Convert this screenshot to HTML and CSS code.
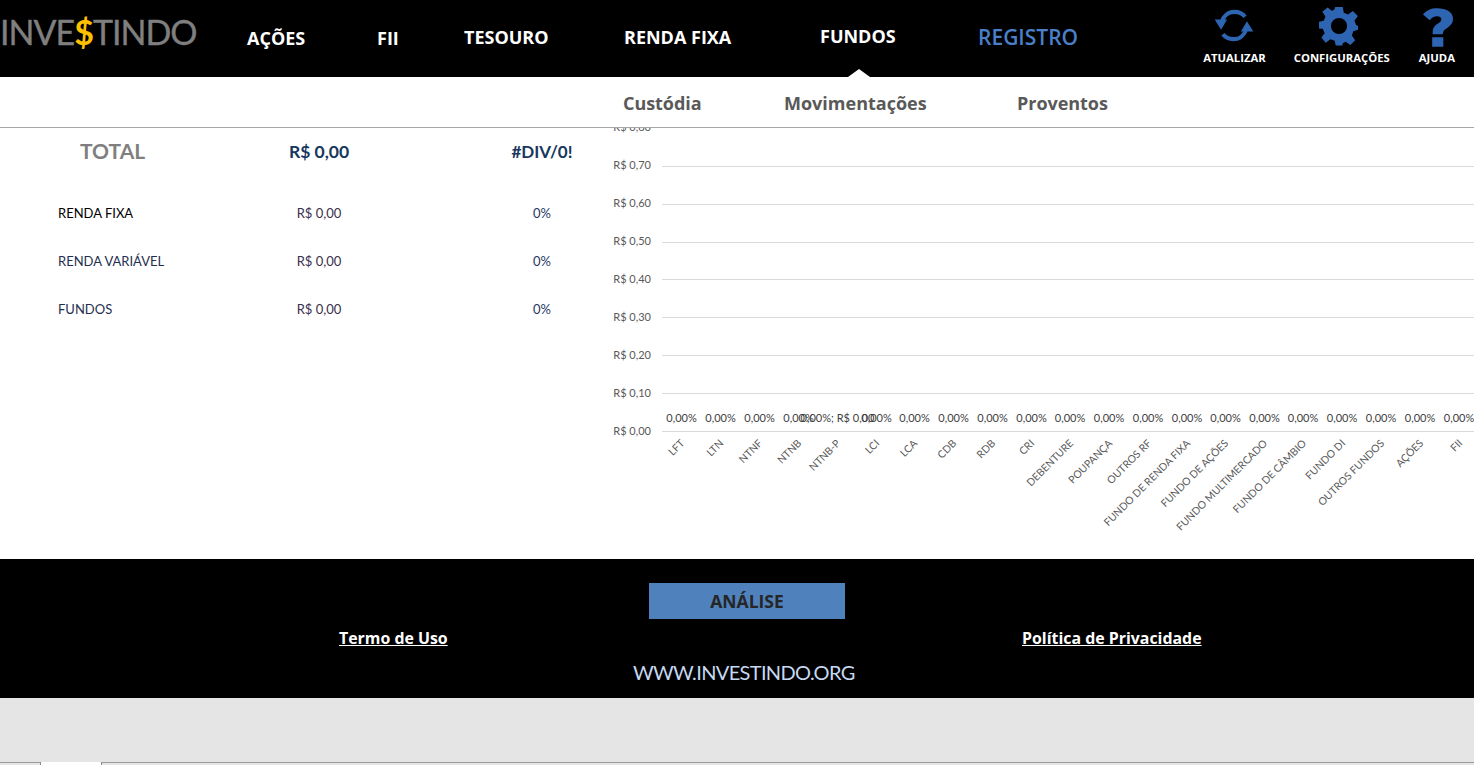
FILE: index.html
```html
<!DOCTYPE html>
<html lang="pt-BR">
<head>
<meta charset="utf-8">
<title>Investindo</title>
<link rel="stylesheet" href="styles.css">
</head>
<body>
<header class="topbar">
  <div class="logo">INVE<span class="logo-dollar">$</span>TINDO</div>
  <nav class="mainnav">
    <a class="nav-item nav-acoes">AÇÕES</a>
    <a class="nav-item nav-fii">FII</a>
    <a class="nav-item nav-tesouro">TESOURO</a>
    <a class="nav-item nav-renda">RENDA FIXA</a>
    <a class="nav-item nav-fundos">FUNDOS</a>
    <a class="nav-item nav-registro">REGISTRO</a>
  </nav>
  <div class="tools">
    <div class="tool">
      <svg class="tool-icon icon-refresh" width="40" height="35" viewBox="0 0 42 38"><g fill="none" stroke="#2e65b3" stroke-width="4.4"><path d="M7.5 15.5C9.5 8.5 15 4.2 21.500 4.200C26.500 4.200 30.500 6.200 33 9.500"/><path d="M34.500 22.500C32.500 29.500 27 33.800 20.500 33.800C15.500 33.800 11.500 31.800 9 28.500"/></g><path fill="#2e65b3" d="M0 12.500L13.500 12.500L7 23.500Z"/><path fill="#2e65b3" d="M42 25.500L28.500 25.500L35 14.500Z"/></svg>
      <span class="tool-label">ATUALIZAR</span>
    </div>
    <div class="tool">
      <svg class="tool-icon icon-gear" width="40" height="40" viewBox="0 0 42 42"><path fill="#2e65b3" fill-rule="evenodd" d="M17 1H25L26 7L30.500 8.800L35.500 5.200L40.800 10.500L37.200 15.500L39 20L41 21V25L36 26.500L34.500 31L38 36L33 41L28 37.500L25 39L24.500 41.500H17.500L16.500 36.500L12 35L7 38.500L2.500 33L6 28.500L4 24L0 23.500V16.500L5 15.500L6.800 11L3.500 6L9 1.500L13.500 5L16 4ZM21 12.500A8.500 8.500 0 1 0 21 29.500A8.500 8.500 0 1 0 21 12.500Z"/></svg>
      <span class="tool-label">CONFIGURAÇÕES</span>
    </div>
    <div class="tool">
      <svg class="tool-icon icon-help" width="30" height="39" viewBox="0 0 31 40"><path fill="#2e65b3" d="M0 6.500C3.500 2 8.500 0 14.500 0C24 0 31 3.800 31 11C31 15.500 28.500 18 25 20.500C22 22.500 20.500 23.500 20.500 27H10V25C10 20.500 12 18.300 15 16.200C17.500 14.500 19 13.500 19 11.500C19 9.500 17 8.500 14.500 8.500C11.500 8.500 9 10 7 12.500ZM9.500 30H21V40H9.500Z"/></svg>
      <span class="tool-label">AJUDA</span>
    </div>
  </div>
</header>

<nav class="subnav">
  <a class="sub-item sub-custodia">Custódia</a>
  <a class="sub-item sub-mov">Movimentações</a>
  <a class="sub-item sub-prov">Proventos</a>
</nav>

<main class="content">
  <section class="summary">
    <div class="sum-total">
      <span class="total-label">TOTAL</span>
      <span class="total-value">R$ 0,00</span>
      <span class="total-pct">#DIV/0!</span>
    </div>
    <div class="sum-row">
      <span class="row-label row-label-first">RENDA FIXA</span>
      <span class="row-value">R$ 0,00</span>
      <span class="row-pct">0%</span>
    </div>
    <div class="sum-row">
      <span class="row-label">RENDA VARIÁVEL</span>
      <span class="row-value">R$ 0,00</span>
      <span class="row-pct">0%</span>
    </div>
    <div class="sum-row">
      <span class="row-label">FUNDOS</span>
      <span class="row-value">R$ 0,00</span>
      <span class="row-pct">0%</span>
    </div>
  </section>
  <section class="chart">
    <svg class="chart-svg" width="862" height="431" viewBox="612 128 862 431">
      <g class="grid">
        <line x1="662" x2="1474" y1="166.500" y2="166.500"/>
        <line x1="662" x2="1474" y1="204.500" y2="204.500"/>
        <line x1="662" x2="1474" y1="242.500" y2="242.500"/>
        <line x1="662" x2="1474" y1="279.500" y2="279.500"/>
        <line x1="662" x2="1474" y1="317.500" y2="317.500"/>
        <line x1="662" x2="1474" y1="355.500" y2="355.500"/>
        <line x1="662" x2="1474" y1="393.500" y2="393.500"/>
        <line x1="662" x2="1474" y1="431.500" y2="431.500"/>
      </g>
      <g class="axis-y">
        <text x="651" y="131">R$ 0,80</text>
        <text x="651" y="169">R$ 0,70</text>
        <text x="651" y="207">R$ 0,60</text>
        <text x="651" y="245">R$ 0,50</text>
        <text x="651" y="283">R$ 0,40</text>
        <text x="651" y="321">R$ 0,30</text>
        <text x="651" y="359">R$ 0,20</text>
        <text x="651" y="397">R$ 0,10</text>
        <text x="651" y="435">R$ 0,00</text>
      </g>
      <g class="vals">
        <text x="681.500" y="422">0,00%</text>
        <text x="720.500" y="422">0,00%</text>
        <text x="759.500" y="422">0,00%</text>
        <text x="798.500" y="422">0,00%</text>
        <text x="837.500" y="422">0,00%; R$ 0,00</text>
        <text x="876.500" y="422">0,00%</text>
        <text x="914.500" y="422">0,00%</text>
        <text x="953.500" y="422">0,00%</text>
        <text x="992.500" y="422">0,00%</text>
        <text x="1031.500" y="422">0,00%</text>
        <text x="1070" y="422">0,00%</text>
        <text x="1109" y="422">0,00%</text>
        <text x="1148" y="422">0,00%</text>
        <text x="1187" y="422">0,00%</text>
        <text x="1225.500" y="422">0,00%</text>
        <text x="1264.500" y="422">0,00%</text>
        <text x="1303" y="422">0,00%</text>
        <text x="1342" y="422">0,00%</text>
        <text x="1381" y="422">0,00%</text>
        <text x="1420" y="422">0,00%</text>
        <text x="1459" y="422">0,00%</text>
      </g>
      <g class="cats">
        <text transform="translate(685 444) rotate(-45)">LFT</text>
        <text transform="translate(724 444) rotate(-45)">LTN</text>
        <text transform="translate(763 444) rotate(-45)">NTNF</text>
        <text transform="translate(802 444) rotate(-45)">NTNB</text>
        <text transform="translate(841 444) rotate(-45)">NTNB-P</text>
        <text transform="translate(880 444) rotate(-45)">LCI</text>
        <text transform="translate(918 444) rotate(-45)">LCA</text>
        <text transform="translate(957 444) rotate(-45)">CDB</text>
        <text transform="translate(996 444) rotate(-45)">RDB</text>
        <text transform="translate(1035 444) rotate(-45)">CRI</text>
        <text transform="translate(1074 444) rotate(-45)">DEBENTURE</text>
        <text transform="translate(1113 444) rotate(-45)">POUPANÇA</text>
        <text transform="translate(1152 444) rotate(-45)">OUTROS RF</text>
        <text transform="translate(1191 444) rotate(-45)">FUNDO DE RENDA FIXA</text>
        <text transform="translate(1229 444) rotate(-45)">FUNDO DE AÇÕES</text>
        <text transform="translate(1268 444) rotate(-45)">FUNDO MULTIMERCADO</text>
        <text transform="translate(1307 444) rotate(-45)">FUNDO DE CÂMBIO</text>
        <text transform="translate(1346 444) rotate(-45)">FUNDO DI</text>
        <text transform="translate(1385 444) rotate(-45)">OUTROS FUNDOS</text>
        <text transform="translate(1424 444) rotate(-45)">AÇÕES</text>
        <text transform="translate(1463 444) rotate(-45)">FII</text>
      </g>
    </svg>
  </section>
</main>

<footer class="footer">
  <div class="btn-row"><a class="btn-analise">ANÁLISE</a></div>
  <div class="legal">
    <a class="legal-link legal-termo">Termo de Uso</a>
    <a class="legal-link legal-priv">Política de Privacidade</a>
  </div>
  <div class="site">WWW.INVESTINDO.ORG</div>
</footer>

<div class="sheetbar">
  <div class="sheet-tab"></div>
</div>
</body>
</html>
```
FILE: styles.css
```css
* { box-sizing: border-box; }
html, body { margin: 0; padding: 0; }
body {
  width: 1474px;
  height: 765px;
  overflow: hidden;
  background: #fff;
  font-family: "Open Sans", "Noto Sans", sans-serif;
}

/* header */
.topbar {
  height: 77px;
  background: #000;
  display: flex;
  position: relative;
}
.logo {
  width: 247px;
  padding-top: 9px;
  font-family: Lato, sans-serif;
  font-size: 34px;
  line-height: 46px;
  letter-spacing: -1px;
  color: #7f7f7f;
  -webkit-text-stroke: 0.4px #7f7f7f;
}
.logo-dollar { color: #ffc000; font-weight: 700; -webkit-text-stroke: 0; }
.mainnav {
  display: grid;
  grid-template-columns: 130px 87px 160px 196px 158px 120px;
  width: 851px;
}
.nav-item {
  font-size: 18px;
  font-weight: 700;
  line-height: 24px;
  color: #fff;
  white-space: nowrap;
  position: relative;
}
.nav-acoes, .nav-fii { padding-top: 26px; }
.nav-tesouro, .nav-renda { padding-top: 25px; }
.nav-fundos { padding-top: 24px; }
.nav-registro { padding-top: 25px; font-size: 21px; color: #4a7fc9; font-weight: 600; }
.nav-fundos::after {
  content: "";
  position: absolute;
  left: 28px;
  top: 69px;
  border-left: 11px solid transparent;
  border-right: 11px solid transparent;
  border-bottom: 8px solid #fff;
}
.tools {
  margin-left: auto;
  padding-right: 19px;
  display: flex;
  gap: 28px;
}
.tool {
  display: flex;
  flex-direction: column;
  align-items: center;
  height: 77px;
  position: relative;
}
.tool:nth-child(3) { margin-left: 1px; }
.tool-icon { position: absolute; top: 8px; }
.icon-gear { top: 6px; transform: translateX(-3px); }
.icon-help { transform: translateX(1px); }
.tool-label {
  margin-top: 50px;
  font-size: 11.300px;
  line-height: 16px;
  font-weight: 700;
  color: #fff;
  white-space: nowrap;
}

/* sub nav */
.subnav {
  height: 51px;
  border-bottom: 1px solid #a6a6a6;
  display: grid;
  grid-template-columns: 161px 233px auto;
  padding-left: 623px;
  align-items: center;
  background: #fff;
}
.sub-item {
  font-size: 18px;
  font-weight: 700;
  color: #595959;
  line-height: 24px;
  padding-top: 2px;
  white-space: nowrap;
}
.sub-custodia, .sub-prov { letter-spacing: -0.05px; }

/* content */
.content {
  height: 431px;
  display: flex;
  overflow: hidden;
}
.summary {
  width: 612px;
  font-family: Lato, sans-serif;
}
.sum-total, .sum-row {
  display: grid;
  grid-template-columns: 58px 210px 102px 120px 104px;
}
.sum-total { height: 61px; padding-top: 9px; line-height: 30px; }
.sum-row { height: 48px; align-items: center; font-size: 13px; color: #2b3350; }
.total-label {
  grid-column: 1 / 3;
  padding-left: 80px;
  font-size: 21px;
  line-height: 27px;
  font-weight: 700;
  color: #7f7f7f;
}
.total-value, .total-pct { font-weight: 700; color: #17375e; text-align: center; }
.total-value { grid-column: 3; font-size: 17.500px; }
.total-pct { grid-column: 5; font-size: 17px; }
.row-label { grid-column: 1 / 3; padding-left: 58px; color: #1f2f4f; }
.row-label-first { color: #000; }
.row-value { grid-column: 3; text-align: center; color: #3a2f4a; }
.row-pct { grid-column: 5; text-align: center; color: #1f3864; }

.chart { width: 862px; height: 431px; }
.chart-svg { display: block; font-family: Lato, sans-serif; font-size: 11px; }
.grid line { stroke: #d9d9d9; stroke-width: 1; }
.axis-y text { fill: #595959; text-anchor: end; }
.vals text { fill: #404040; text-anchor: middle; }
.cats text { fill: #595959; text-anchor: end; font-size: 10.400px; }

/* footer */
.footer {
  height: 139px;
  background: #000;
  padding-top: 24px;
}
.btn-row { display: flex; padding-left: 649px; }
.btn-analise {
  width: 196px;
  height: 36px;
  background: #4f81bd;
  color: #262626;
  font-size: 17.500px;
  font-weight: 700;
  line-height: 36px;
  text-align: center;
}
.legal {
  display: grid;
  grid-template-columns: 339px 683px auto;
  margin-top: 7px;
  line-height: 24px;
}
.legal-link {
  color: #fff;
  font-size: 15.900px;
  font-weight: 700;
  text-decoration: underline;
  white-space: nowrap;
}
.legal-termo { grid-column: 2; justify-self: start; }
.legal-priv { grid-column: 3; }
.site {
  margin-top: 8px;
  padding-left: 633px;
  font-family: Lato, sans-serif;
  font-size: 20px;
  line-height: 28px;
  letter-spacing: -0.65px;
  color: #c6d9f0;
}

/* sheet bar */
.sheetbar {
  height: 67px;
  background: #e5e5e5;
  position: relative;
}
.sheetbar::after {
  content: "";
  position: absolute;
  left: 0;
  right: 0;
  top: 64px;
  height: 1px;
  background: #9a9a9a;
}
.sheet-tab {
  position: absolute;
  left: 40px;
  top: 64px;
  width: 62px;
  height: 3px;
  background: #fff;
  border-left: 1px solid #8a8a8a;
  border-right: 1px solid #8a8a8a;
  z-index: 1;
}
```
